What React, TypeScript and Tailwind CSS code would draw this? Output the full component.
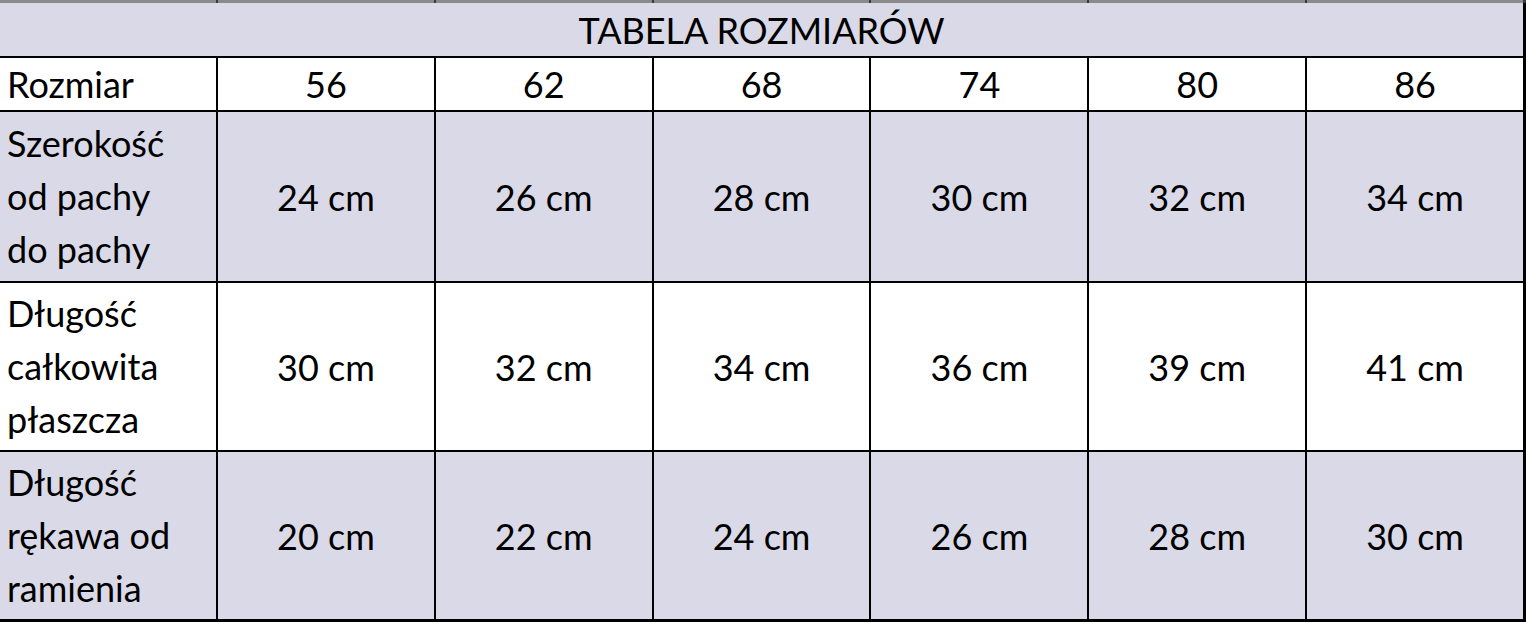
const sizes = ["56", "62", "68", "74", "80", "86"];

const rows = [
  { label: ["Szerokość", "od pachy", "do pachy"], values: ["24 cm", "26 cm", "28 cm", "30 cm", "32 cm", "34 cm"], tinted: true, h: "h-[169px]" },
  { label: ["Długość", "całkowita", "płaszcza"], values: ["30 cm", "32 cm", "34 cm", "36 cm", "39 cm", "41 cm"], tinted: false, h: "h-[167px]" },
  { label: ["Długość", "rękawa od", "ramienia"], values: ["20 cm", "22 cm", "24 cm", "26 cm", "28 cm", "30 cm"], tinted: true, h: "h-[167px]" },
];

export default function App() {
  return (
    <div className="w-[1526px] h-[622px] bg-white text-black font-['Lato',sans-serif] text-[36px] overflow-hidden">
      {/* strip left over from the sheet's column headers */}
      <div className="grid grid-cols-[216px_repeat(6,1fr)] gap-[2px] h-[3px] bg-[#3a3a3a] pr-[3px]">
        <div className="bg-[#8a8a8a]" />
        {sizes.map((s) => (
          <div key={s} className="bg-[#8a8a8a]" />
        ))}
      </div>
      <div className="grid grid-cols-[216px_repeat(6,1fr)] gap-[2px] bg-black pr-[3px] pb-[3px]">
        <div className="col-span-7 h-[53px] bg-[#d9d9e7] flex items-center justify-center">
          TABELA ROZMIARÓW
        </div>
        <div className="h-[52px] bg-white flex items-center pl-[7px]">Rozmiar</div>
        {sizes.map((s) => (
          <div key={s} className="h-[52px] bg-white flex items-center justify-center">
            {s}
          </div>
        ))}
        {rows.map((r, i) => {
          const bg = r.tinted ? "bg-[#d9d9e7]" : "bg-white";
          return [
            <div key={`l${i}`} className={`${r.h} ${bg} flex flex-col justify-center pl-[7px] leading-[53px]`}>
              {r.label.map((t) => (
                <span key={t}>{t}</span>
              ))}
            </div>,
            ...r.values.map((v, j) => (
              <div key={`v${i}-${j}`} className={`${r.h} ${bg} flex items-center justify-center`}>
                {v}
              </div>
            )),
          ];
        })}
      </div>
    </div>
  );
}
